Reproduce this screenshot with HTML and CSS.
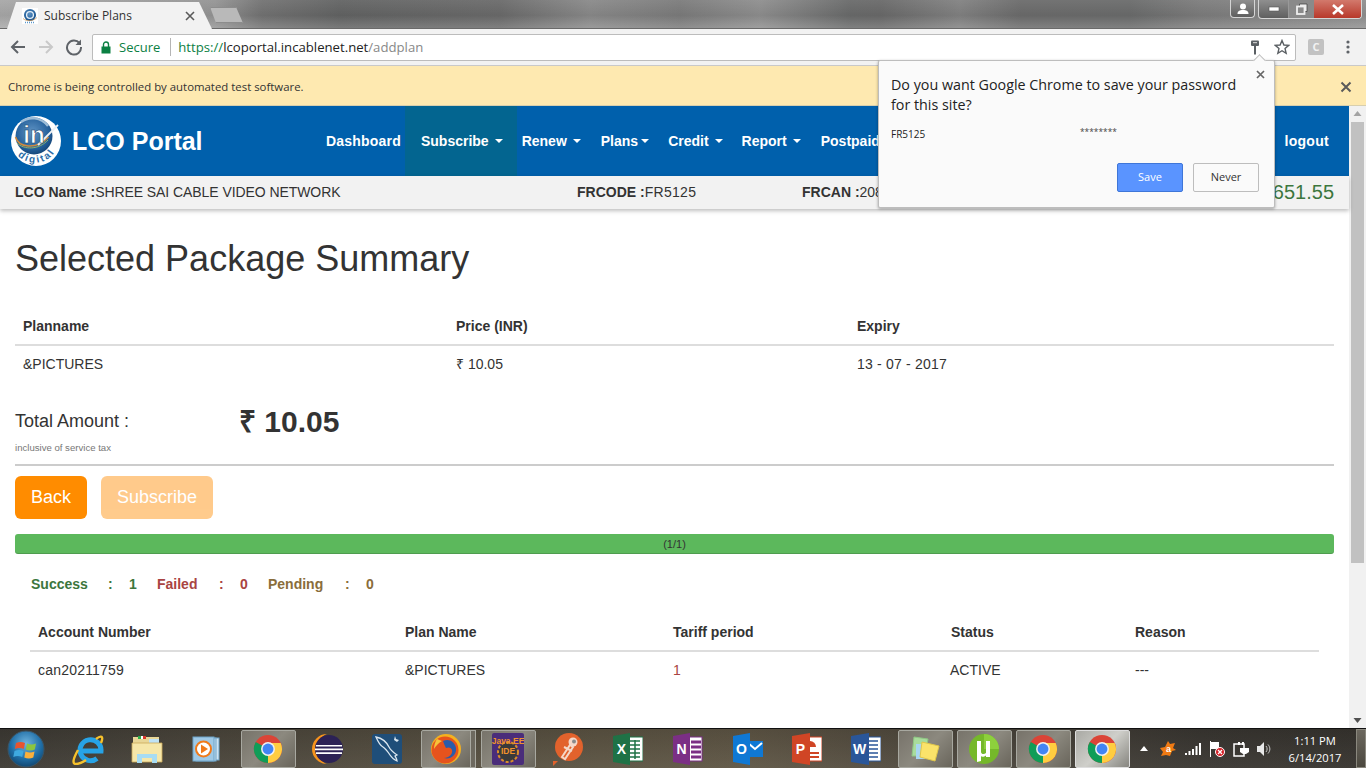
FILE: index.html
```html
<!DOCTYPE html>
<html lang="en">
<head>
<meta charset="utf-8">
<title>Subscribe Plans</title>
<link rel="stylesheet" href="styles.css">
</head>
<body>
<svg class="defs" width="0" height="0">
  <defs>
    <symbol id="chrome" viewBox="0 0 32 32">
      <circle cx="16" cy="16" r="15" fill="#db4437"/>
      <path d="M16 16 L3 23.5 A15 15 0 0 0 16 31 L24 16Z" fill="#0f9d58"/>
      <path d="M3 8.5 A15 15 0 0 0 3 23.5 L9.5 27 L16 16Z" fill="#0f9d58"/>
      <path d="M16 16 L16 31 A15 15 0 0 0 29.5 9.5 L16 9.5Z" fill="#ffcd40"/>
      <circle cx="16" cy="16" r="7.4" fill="#f1f1f1"/>
      <circle cx="16" cy="16" r="5.8" fill="#4285f4"/>
    </symbol>
    <radialGradient id="sphere" cx=".45" cy=".4" r=".65"><stop offset="0" stop-color="#5f93c4"/><stop offset=".7" stop-color="#24609b"/><stop offset="1" stop-color="#123f70"/></radialGradient>
  </defs>
</svg>

<header class="titlebar">
  <div class="tab">
    <svg class="favicon" width="16" height="16" viewBox="0 0 16 16"><rect width="16" height="16" fill="#fff"/><circle cx="8" cy="7" r="6" fill="url(#sphere)"/><circle cx="8" cy="7" r="3.4" fill="none" stroke="#e4eef6" stroke-width="1.300"/><path d="M1 10.500c3 3 10 3 14-1" fill="none" stroke="#c98f4a" stroke-width=".7"/><path d="M3 14.500h10" stroke="#5a98cc" stroke-width="1.600" stroke-dasharray="1 1"/></svg>
    <span class="tab-title">Subscribe Plans</span>
    <svg class="tab-close" width="10" height="10" viewBox="0 0 10 10"><path d="M1 1l8 8M9 1l-8 8" stroke="#5a5a5a" stroke-width="1.600"/></svg>
  </div>
  <div class="newtab"></div>
  <div class="winctrls">
    <div class="winbtn profile"><svg width="14" height="12" viewBox="0 0 14 12"><circle cx="7" cy="3.500" r="3" fill="#fff"/><path d="M1.500 11c0-3 2-4 5.500-4s5.500 1 5.500 4z" fill="#fff"/></svg></div>
    <div class="wingroup">
      <div class="winbtn min"><svg width="12" height="6" viewBox="0 0 12 6"><rect x="1" y="1" width="10" height="4" fill="#fff" stroke="#555" stroke-width=".6"/></svg></div>
      <div class="winbtn max"><svg width="12" height="12" viewBox="0 0 12 12"><path d="M3.500 1h7.500v7.500H8.500V3.500h-5z" fill="#eee" stroke="#444" stroke-width=".8"/><rect x="1" y="3.500" width="7.500" height="7.500" fill="none" stroke="#eee" stroke-width="1.800"/></svg></div>
      <div class="winbtn close"><svg width="14" height="11" viewBox="0 0 14 11"><path d="M2 1l10 9M12 1L2 10" stroke="#fff" stroke-width="2.600"/></svg></div>
    </div>
  </div>
</header>

<nav class="toolbar">
  <svg class="tool" width="18" height="18" viewBox="0 0 18 18"><path d="M16 9H3M9 3L3 9l6 6" fill="none" stroke="#5f6368" stroke-width="2"/></svg>
  <svg class="tool" width="18" height="18" viewBox="0 0 18 18"><path d="M2 9h13M9 3l6 6-6 6" fill="none" stroke="#c9c9c9" stroke-width="2"/></svg>
  <svg class="tool" width="18" height="18" viewBox="0 0 18 18"><path d="M14.500 5.200A7 7 0 1 0 16 9" fill="none" stroke="#5f6368" stroke-width="2"/><path d="M16 1.500V7h-5.500z" fill="#5f6368"/></svg>
  <div class="omnibox">
    <svg class="lock" width="10" height="13" viewBox="0 0 10 13"><path d="M2.500 6V3.500a2.500 2.500 0 0 1 5 0V6" fill="none" stroke="#0b8043" stroke-width="1.400"/><rect x="0.500" y="5.500" width="9" height="7" fill="#0b8043"/></svg>
    <span class="secure">Secure</span>
    <span class="sep"></span>
    <span class="url"><span class="u-scheme">https://</span><span class="u-host">lcoportal.incablenet.net</span><span class="u-path">/addplan</span></span>
    <svg class="key" width="10" height="15" viewBox="0 0 10 15"><rect x="1" y="0.500" width="8" height="5.500" rx="1" fill="#5a5f63"/><rect x="3" y="2" width="4" height="1.200" fill="#c8c8c8"/><rect x="4" y="6" width="2" height="8.500" fill="#5a5f63"/></svg>
    <svg class="star" width="16" height="16" viewBox="0 0 16 16"><path d="M8 1.500l1.900 4.500 4.800.4-3.650 3.150 1.100 4.700L8 11.700l-4.150 2.550 1.100-4.700L1.300 6.400l4.800-.4z" fill="none" stroke="#5a5f63" stroke-width="1.400"/></svg>
  </div>
  <span class="ext">C</span>
  <svg class="dots" width="4" height="14" viewBox="0 0 4 14"><circle cx="2" cy="2" r="1.600" fill="#5f6368"/><circle cx="2" cy="7" r="1.600" fill="#5f6368"/><circle cx="2" cy="12" r="1.600" fill="#5f6368"/></svg>
</nav>

<div class="automation">
  <span>Chrome is being controlled by automated test software.</span>
  <svg width="12" height="12" viewBox="0 0 12 12"><path d="M1.500 1.500l9 9M10.500 1.500l-9 9" stroke="#5a5a5a" stroke-width="2"/></svg>
</div>

<div class="viewport">
  <main class="page">
    <div class="navbar">
      <div class="brand">
        <svg class="logo" width="50" height="50" viewBox="0 0 50 50">
          <circle cx="25" cy="25" r="25" fill="#fff"/>
          <circle cx="23" cy="20" r="18.500" fill="url(#sphere)"/>
          <path d="M4.500 21c3 10 20 14 33 0" fill="none" stroke="#d08a3c" stroke-width="1.600"/>
          <path d="M6 27c7 7 22 7 31-3" fill="none" stroke="#8fb06a" stroke-width="1"/>
          <path d="M10 6c8-6 20-5 27 4" fill="none" stroke="#9dbdd8" stroke-width="2.400"/>
          <path d="M47 9L27 29" stroke="#eef2f4" stroke-width="1.800"/>
          <text class="logo-in" x="23" y="27" text-anchor="middle">in</text>
          <path id="logoarc" d="M6.500 39A23.500 23.500 0 0 0 47.500 23" fill="none"/>
          <text class="logo-digital"><textPath href="#logoarc" startOffset="1%">digital</textPath></text>
        </svg>
        <span class="brand-name">LCO Portal</span>
      </div>
      <ul class="menu">
        <li class="menu-item m-dash">Dashboard</li>
        <li class="menu-item active">Subscribe<i class="caret"></i></li>
        <li class="menu-item">Renew<i class="caret"></i></li>
        <li class="menu-item m-tight">Plans<i class="caret tight"></i></li>
        <li class="menu-item m-tight">Credit<i class="caret"></i></li>
        <li class="menu-item">Report<i class="caret"></i></li>
        <li class="menu-item">Postpaid</li>
      </ul>
      <span class="logout">logout</span>
    </div>
    <div class="infobar">
      <span class="cell c1"><b>LCO Name :</b><span class="lco-val">SHREE SAI CABLE VIDEO NETWORK</span></span>
      <span class="cell c2"><b>FRCODE :</b><span class="fr-val">FR5125</span></span>
      <span class="cell c3"><b>FRCAN :</b>20845125</span>
      <span class="balance">651.55</span>
    </div>
    <div class="content">
      <h1>Selected Package Summary</h1>
      <table class="plans">
        <thead><tr><th class="p1">Planname</th><th class="p2">Price (INR)</th><th>Expiry</th></tr></thead>
        <tbody><tr><td>&amp;PICTURES</td><td>₹ 10.05</td><td class="date">13 - 07 - 2017</td></tr></tbody>
      </table>
      <div class="total">
        <div class="total-label"><span>Total Amount :</span><small>inclusive of service tax</small></div>
        <div class="total-value">₹ 10.05</div>
      </div>
      <hr class="rule">
      <div class="actions">
        <button class="btn">Back</button>
        <button class="btn faded">Subscribe</button>
      </div>
      <div class="progress">(1/1)</div>
      <div class="stats">
        <span class="s-ok w1">Success</span><span class="s-ok w2">:</span><span class="s-ok w3">1</span>
        <span class="s-bad w4">Failed</span><span class="s-bad w5">:</span><span class="s-bad w6">0</span>
        <span class="s-pen w7">Pending</span><span class="s-pen w8">:</span><span class="s-pen">0</span>
      </div>
      <table class="results">
        <thead><tr><th class="r1">Account Number</th><th class="r2">Plan Name</th><th class="r3">Tariff period</th><th class="r4">Status</th><th>Reason</th></tr></thead>
        <tbody><tr><td class="acct">can20211759</td><td>&amp;PICTURES</td><td class="tariff">1</td><td class="active-status">ACTIVE</td><td>---</td></tr></tbody>
      </table>
    </div>
  </main>
  <div class="scrollbar">
    <svg width="17" height="16" viewBox="0 0 17 16"><path d="M8.500 5l4 5h-8z" fill="#a3a3a3"/></svg>
    <div class="thumb"></div>
    <div class="track"></div>
    <svg width="17" height="16" viewBox="0 0 17 16"><path d="M8.500 11l4-5h-8z" fill="#505050"/></svg>
  </div>

  <aside class="bubble">
    <i class="bubble-arrow"></i>
    <svg class="bubble-close" width="9" height="9" viewBox="0 0 9 9"><path d="M1 1l7 7M8 1L1 8" stroke="#666" stroke-width="1.700"/></svg>
    <p class="bubble-title">Do you want Google Chrome to save your password for this site?</p>
    <div class="cred"><span class="cred-user">FR5125</span><span class="mask">********</span></div>
    <div class="bubble-actions">
      <button class="bbtn save">Save</button>
      <button class="bbtn never">Never</button>
    </div>
  </aside>
</div>

<footer class="taskbar">
  <div class="start">
    <svg width="38" height="38" viewBox="0 0 38 38">
      <defs><radialGradient id="orb" cx=".5" cy=".35" r=".7"><stop offset="0" stop-color="#6fb4de"/><stop offset=".6" stop-color="#1f6ea6"/><stop offset="1" stop-color="#0f3f66"/></radialGradient></defs>
      <circle cx="19" cy="19" r="18" fill="url(#orb)" stroke="#3b5566"/>
      <path d="M9 13c3-1.500 6-1.500 9 0l-1.200 6c-3-1.300-6-1.300-9 0z" fill="#e8542f"/>
      <path d="M20 13.500c3 1.300 6 1.300 9 0l-1.200 6c-3 1.300-6 1.300-9 0z" fill="#8cc63f"/>
      <path d="M7.500 21c3-1.300 6-1.300 9 0l-1.200 6c-3-1.300-6-1.300-9 0z" fill="#3fa9e0"/>
      <path d="M18.500 21.500c3 1.300 6 1.300 9 0l-1.200 6c-3 1.300-6 1.300-9 0z" fill="#fbb03b"/>
    </svg>
  </div>
  <div class="tasks">
    <div class="task"><svg width="32" height="32" viewBox="0 0 32 32"><path d="M8 18h21A10.500 10.500 0 1 0 25 25.500" fill="none" stroke="#27a3e6" stroke-width="5"/><path d="M24 6c5-4 8-3 5 4M6 17C1 26 0 31 4 31c3 0 7-2 10-4" fill="none" stroke="#f6c12c" stroke-width="2.400"/></svg></div>
    <div class="task"><svg width="32" height="32" viewBox="0 0 32 32"><path d="M2 4h26v6H2z" fill="#e9d797"/><path d="M7 3h8v3H7z" fill="#fff"/><path d="M7 3h3v3H7z" fill="#2bb24c"/><path d="M12 3h3v3h-3z" fill="#d8392b"/><path d="M18 6h10v4H18z" fill="#bfe2f5"/><path d="M1 10h30v19H1z" fill="#f6e7a9" stroke="#caa95a" stroke-width=".8"/><path d="M6 30v-9h20v9h-5v-5H11v5z" fill="#a7dcf3"/></svg></div>
    <div class="task"><svg width="28" height="28" viewBox="0 0 28 28"><rect x="7" y="3" width="20" height="22" fill="#cfe4f3" stroke="#6ea4c8"/><rect x="4" y="3" width="20" height="23" fill="#bcd9ee" stroke="#6ea4c8"/><rect x="1" y="2" width="21" height="24" fill="#9fc9e6" stroke="#6ea4c8"/><circle cx="11.500" cy="14" r="8.500" fill="#f07a1a"/><circle cx="11.500" cy="14" r="6.500" fill="#fff"/><path d="M9 9.500l7 4.500-7 4.500z" fill="#f07a1a"/></svg></div>
    <div class="task lit gap3"><svg width="30" height="30"><use href="#chrome"/></svg></div>
    <div class="task gap1"><svg width="32" height="32" viewBox="0 0 32 32"><path d="M15 1a15 15 0 0 0 0 30c-6-2-10-8-10-15S9 3 15 1z" fill="#f7941e"/><circle cx="17" cy="16" r="14" fill="#2c2255"/><path d="M4 12h26v1.600H4zM3 15.500h28v1.800H3zM4 19.300h26v1.600H4z" fill="#fff"/></svg></div>
    <div class="task"><svg width="32" height="32" viewBox="0 0 32 32"><rect x="1" y="1" width="30" height="30" rx="3" fill="#1f4e79"/><path d="M5 4c5 1 10 4 13 10 2 4 5 6 8 8l-2 1c1 2 2 3 2 5-3-1-5-3-7-6-2-3-4-6-7-8-2-1-4-3-7-10z" fill="none" stroke="#dbe7f0" stroke-width="1.300"/><path d="M24 3l1 3 3 1-2 2-3-2z" fill="#dbe7f0"/></svg></div>
    <div class="task lit ff"><svg width="32" height="32" viewBox="0 0 32 32"><circle cx="16" cy="16" r="15" fill="#f5b11e"/><circle cx="15" cy="17" r="13.500" fill="#e6531d"/><path d="M13 8c6-3 12 1 13 7 1 7-6 12-12 10 5 0 9-4 8-8-1-3-4-3-6-2-1-2-2-4-3-7z" fill="#2a5caa"/><path d="M7 6c-2 3-3 6-3 10 2-3 4-6 8-8z" fill="#f7c23a"/></svg></div>
    <div class="task lit gap3"><svg width="32" height="32" viewBox="0 0 32 32"><rect x="0" y="0" width="32" height="32" rx="2" fill="#4a2d7a"/><circle cx="16" cy="19" r="10" fill="#3a3a3a" stroke="#d98d2b" stroke-width="2" stroke-dasharray="3 2"/><text class="jee" x="16" y="11" text-anchor="middle">Java EE</text><text class="jee" x="16" y="21" text-anchor="middle">IDE</text></svg></div>
    <div class="task gap1"><svg width="32" height="34" viewBox="0 0 32 34"><circle cx="17" cy="15" r="14" fill="#e2622c"/><path d="M1 29l5 0-5 5z" fill="#e2622c"/><path d="M10 25l8-12 3 2-8 12zM12 15l8 4" stroke="#f4d8c8" stroke-width="2" fill="none"/><circle cx="21" cy="10" r="4.500" fill="#f4d8c8"/><circle cx="22" cy="9.500" r="2" fill="#8a8a8a"/></svg></div>
    <div class="task gap1"><svg class="office" width="30" height="32" viewBox="0 0 30 32"><rect x="14" y="4" width="16" height="24" fill="#fff" stroke="#1f7246"/><path d="M17 8h10M17 12h10M17 16h10M17 20h10M17 24h10M22 7v19" stroke="#1f7246" stroke-width="1.500"/><path d="M0 3l17-3v32L0 29z" fill="#1f7246"/><text class="ofc" x="8.500" y="21" text-anchor="middle">X</text></svg></div>
    <div class="task gap1"><svg class="office" width="30" height="32" viewBox="0 0 30 32"><rect x="14" y="4" width="15" height="24" fill="#fff" stroke="#7b2f85"/><path d="M18 9h10M18 14h10M18 19h10M18 24h10" stroke="#7b2f85" stroke-width="3"/><path d="M0 3l17-3v32L0 29z" fill="#7b2f85"/><text class="ofc" x="8.500" y="21" text-anchor="middle">N</text></svg></div>
    <div class="task gap1"><svg class="office" width="30" height="32" viewBox="0 0 30 32"><rect x="14" y="8" width="16" height="16" fill="#0f78d4"/><path d="M15 10l7 6 7-6" fill="none" stroke="#fff" stroke-width="2"/><path d="M0 3l17-3v32L0 29z" fill="#0f78d4"/><text class="ofc" x="8.500" y="21" text-anchor="middle">O</text></svg></div>
    <div class="task"><svg class="office" width="30" height="32" viewBox="0 0 30 32"><rect x="14" y="4" width="16" height="24" fill="#fff" stroke="#d04525"/><path d="M18 8v6h6a6 6 0 0 0-6-6z" fill="#d04525"/><path d="M18 20h9M18 24h9" stroke="#d04525" stroke-width="2"/><path d="M0 3l18-3v32L0 29z" fill="#d04525"/><text class="ofc" x="8.500" y="21" text-anchor="middle">P</text></svg></div>
    <div class="task"><svg class="office" width="30" height="32" viewBox="0 0 30 32"><rect x="14" y="4" width="16" height="24" fill="#fff" stroke="#2a5699"/><path d="M18 8h9M18 12h9M18 16h9M18 20h9M18 24h9" stroke="#2a5699" stroke-width="1.500"/><path d="M0 3l18-3v32L0 29z" fill="#2a5699"/><text class="ofc" x="8.500" y="21" text-anchor="middle">W</text></svg></div>
    <div class="task lit"><svg width="32" height="30" viewBox="0 0 32 30"><path d="M5 3l14 2-3 17H3z" fill="#a9dc9c" stroke="#8fc684"/><path d="M7 10h13v15H7z" fill="#a9d6f0"/><path d="M13 8l17 4-4 15-15-4z" fill="#fbe36a" stroke="#e0c64b"/></svg></div>
    <div class="task lit"><svg width="32" height="32" viewBox="0 0 32 32"><circle cx="16" cy="16" r="15" fill="#75b82a"/><path d="M16 1a15 15 0 0 1 15 15H16z" fill="#8dd03c"/><path d="M9 8h4v11c0 2 3 3 5 1V8h4v16h-4v-1.500c-2 1.500-4 1.500-5 .8V28l-4 1z" fill="#fff"/></svg></div>
    <div class="task lit"><svg width="30" height="30"><use href="#chrome"/></svg></div>
    <div class="task lit bright"><svg width="30" height="30"><use href="#chrome"/></svg></div>
  </div>
  <div class="tray">
    <svg class="tray-caret" width="8" height="5" viewBox="0 0 8 5"><path d="M4 0l4 5H0z" fill="#fff"/></svg>
    <svg class="tray-avast" width="16" height="16" viewBox="0 0 16 16"><path d="M8 0l2 3 5-1-2 5 3 2-4 1-2 5-4-1-5 1 2-4-3-4 5-1z" fill="#f07a13"/><text class="avast" x="8.500" y="11" text-anchor="middle">a</text></svg>
    <svg width="16" height="13" viewBox="0 0 16 13"><path d="M0 11h2v2H0zM3.500 9h2v4h-2zM7 7h2v6H7zM10.500 4h2v9h-2zM14 1h2v12h-2z" fill="#fff"/></svg>
    <svg width="16" height="16" viewBox="0 0 16 16"><path d="M1.500 0v16" stroke="#fff"/><path d="M2 1h8v7H2z" fill="#fff"/><circle cx="11" cy="11" r="4.500" fill="#d61f26" stroke="#fff"/><path d="M9 9l4 4M13 9l-4 4" stroke="#fff" stroke-width="1.300"/></svg>
    <svg width="16" height="16" viewBox="0 0 16 16"><rect x="1" y="3" width="10" height="12" fill="none" stroke="#fff" stroke-width="1.500"/><path d="M5 1h2v3H5zM9 1h2v3H9z" fill="#fff"/><path d="M7 7h9v4l-3 2h-3l-3-2z" fill="#fff"/></svg>
    <svg width="16" height="14" viewBox="0 0 16 14"><path d="M0 4h3l4-4v14l-4-4H0z" fill="#e8e8e8"/><path d="M9 4c1.500 2 1.500 4 0 6M11 2.500c2.500 3 2.500 6 0 9" fill="none" stroke="#c9c9c9"/></svg>
  </div>
  <div class="clock"><span>1:11 PM</span><span>6/14/2017</span></div>
  <div class="showdesk"></div>
</footer>
</body>
</html>
```

FILE: styles.css
```css
* { box-sizing: border-box; }
html, body { margin: 0; height: 768px; overflow: hidden; }
body {
  width: 1366px;
  display: flex;
  flex-direction: column;
  font-family: "Liberation Sans", Arial, sans-serif;
  color: #333;
  background: #fff;
}
.defs { position: absolute; }

/* Browser frame */
.titlebar {
  height: 29px;
  flex: none;
  display: flex;
  align-items: flex-end;
  padding-left: 7px;
  background:
    linear-gradient(180deg, rgba(255,255,255,.05), rgba(0,0,0,.05) 55%, rgba(255,255,255,.14)),
    linear-gradient(90deg, #a8a8a8 0, #959595 215px, #737373 262px, #636464 340px, #6b6b6b 500px, #8a8a8a 590px, #7c7c7c 680px, #8f8f8f 760px, #6a6b6b 850px, #6a6a6a 880px, #828282 960px, #6c6c6c 1020px, #6b6c6c 1130px, #7d7d7d 1200px, #909090 1366px);
  border-bottom: 1px solid #6a6a6a;
}
.tab {
  width: 205px;
  height: 27px;
  margin-bottom: -1px;
  display: flex;
  align-items: center;
  padding: 0 17px 0 15px;
  background: #f2f2f2;
  clip-path: polygon(0 100%, 9px 0, 192px 0, 100% 100%);
}
.tab-title {
  margin-left: 6px;
  flex: 1;
  font: 12px "Open Sans", "Noto Sans", sans-serif;
  color: #333;
}
.newtab {
  width: 33px;
  height: 16px;
  margin: 0 0 5px -2px;
  background: #b9b9b9;
  border: 1px solid #8c8c8c;
  clip-path: polygon(0 0, 26px 0, 100% 100%, 6px 100%);
}
.winctrls {
  margin-left: auto;
  align-self: flex-start;
  display: flex;
  gap: 3px;
  padding-right: 4px;
}
.winbtn { display: flex; align-items: center; justify-content: center; height: 18px; }
.profile, .wingroup {
  border: 1px solid #d5d5d5;
  border-top: 0;
  border-radius: 0 0 4px 4px;
  background: linear-gradient(180deg, #8f8f8f, #5f5f5f);
}
.profile { width: 25px; }
.wingroup { display: flex; overflow: hidden; }
.min { width: 29px; }
.max { width: 26px; border-left: 1px solid #999; background: #8a8a8a; }
.close { width: 47px; background: linear-gradient(180deg, #d2796c, #b8382a); }

.toolbar {
  height: 36px;
  flex: none;
  display: flex;
  align-items: center;
  padding-left: 9px;
  background: #f2f2f2;
}
.tool { margin-right: 10px; flex: none; }
.omnibox {
  width: 1204px;
  height: 27px;
  margin-left: -1px;
  display: flex;
  align-items: center;
  padding: 0 5px 0 8px;
  background: #fff;
  border: 1px solid #bcbcbc;
  border-radius: 2px;
  font: 13px "Open Sans", "Noto Sans", sans-serif;
}
.secure { margin-left: 8px; color: #0b8043; }
.sep { width: 1px; height: 18px; margin: 0 7px 0 10px; background: #b5b5b5; }
.url { flex: 1; font-size: 13.160px; color: #0b7f8a; }
.u-scheme { color: #0b8043; }
.u-host { color: #222; }
.u-path { color: #888; }
.key { margin-right: 14px; }
.ext {
  width: 16px;
  height: 16px;
  margin-left: 12px;
  background: #c2c2c2;
  border-radius: 2px;
  color: #f2f2f2;
  font: bold 11px/16px "Open Sans", sans-serif;
  text-align: center;
}
.dots { margin-left: 22px; }
.automation {
  height: 41px;
  flex: none;
  display: flex;
  align-items: center;
  justify-content: space-between;
  padding: 2px 14px 0 8px;
  background: #fee9b0;
  border-top: 1px solid #c9c9c9;
  border-bottom: 1px solid #d8cfae;
  font: 11.400px "Open Sans", "Noto Sans", sans-serif;
  color: #333;
}

/* Page */
.viewport { position: relative; flex: 1; min-height: 0; display: flex; }
.page { flex: 1; min-width: 0; }
.navbar {
  height: 70px;
  display: flex;
  align-items: center;
  padding-left: 11px;
  background: #0060ac;
  color: #fff;
}
.brand { display: flex; align-items: center; width: 305px; }
.brand-name { margin-left: 11px; font-size: 25px; font-weight: bold; }
.logo-in { font: bold 24px "Liberation Sans", sans-serif; fill: #fff; stroke: #143f6e; stroke-width: .6px; }
.logo-digital { font: bold 10px "Liberation Sans", sans-serif; fill: #2a6ba8; letter-spacing: 2px; }
.menu {
  list-style: none;
  display: flex;
  align-items: stretch;
  height: 100%;
  margin: 0;
  padding: 0;
  font-size: 14px;
  font-weight: bold;
}
.menu-item { display: flex; align-items: center; padding: 0 10px; }
.m-dash { letter-spacing: .2px; }
.m-tight { padding-right: 9px; }
.menu-item.active { padding: 0 14px 0 16px; margin: 0 -5px 0 -6px; background: #036590; }
.caret {
  width: 0;
  height: 0;
  margin-left: 6px;
  border-top: 4px solid #fff;
  border-left: 4px solid transparent;
  border-right: 4px solid transparent;
}
.caret.tight { margin-left: 3px; }
.logout { margin-left: auto; margin-right: 20px; font-size: 14px; font-weight: bold; letter-spacing: .3px; }
.infobar {
  position: relative;
  height: 33px;
  display: flex;
  align-items: center;
  padding: 0 15px 2px;
  background: #f2f2f2;
  box-shadow: 0 2px 4px rgba(0,0,0,.25);
  font-size: 14px;
  color: #333;
}
.cell { flex: none; }
.c1 { width: 562px; }
.c2 { width: 225px; }
.lco-val { letter-spacing: -.07px; }
.fr-val { letter-spacing: .3px; }
.balance { margin-left: auto; margin-top: 2px; font-size: 20px; color: #3c763d; }

.content { padding: 0 15px; }
h1 {
  margin: 30px 0 0;
  font-size: 36px;
  line-height: 40px;
  font-weight: 400;
}
table { width: 100%; border-collapse: collapse; font-size: 14px; }
th { text-align: left; font-weight: bold; padding: 8px; line-height: 20px; border-bottom: 2px solid #ddd; }
td { padding: 8px; line-height: 20px; }
.plans { margin-top: 29px; }
.p1 { width: 433px; }
.p2 { width: 401px; }
.date { letter-spacing: .2px; }
.total { display: flex; margin-top: 19px; height: 63px; }
.total-label { width: 224px; display: flex; flex-direction: column; font-size: 18px; line-height: 20px; padding-top: 10px; }
.total-label small { margin-top: 11px; font-size: 9.600px; line-height: 12px; color: #777; }
.total-value { font-size: 30px; line-height: 36px; font-weight: bold; padding-top: 3px; }
.rule { margin: 0; border: 0; border-top: 2px solid #ccc; }
.actions { display: flex; gap: 14px; margin-top: 10px; }
.btn {
  height: 43px;
  padding: 0 16px;
  border: 0;
  border-radius: 6px;
  background: #ff8c00;
  color: #fff;
  font: 18px "Liberation Sans", sans-serif;
}
.btn.faded { opacity: .45; }
.progress {
  height: 20px;
  margin-top: 15px;
  border-radius: 3px;
  background: #5cb85c;
  box-shadow: inset 0 -1px 0 rgba(0,0,0,.15);
  text-align: center;
  font-size: 11px;
  line-height: 20px;
  color: #333;
}
.stats { display: flex; margin: 20px 0 0 16px; font-size: 14px; font-weight: bold; line-height: 20px; }
.w1 { width: 77px; }
.w2 { width: 21px; }
.w3 { width: 28px; }
.w4 { width: 62px; }
.w5 { width: 21px; }
.w6 { width: 28px; }
.w7 { width: 77px; }
.w8 { width: 21px; }
.s-ok { color: #3c763d; }
.s-bad { color: #a94442; }
.s-pen { color: #8a6d3b; }
.results { margin: 20px 0 0 15px; width: 1289px; }
.r1 { width: 367px; }
.r2 { width: 268px; }
.r3 { width: 278px; }
.r4 { width: 184px; }
.acct { letter-spacing: .2px; }
.tariff { color: #a94442; }
.active-status { padding-left: 7px; }

.scrollbar {
  width: 17px;
  flex: none;
  display: flex;
  flex-direction: column;
  background: #f1f1f1;
}
.thumb { height: 441px; margin: 0 2px; background: #c1c1c1; }
.track { flex: 1; }

/* Save-password bubble */
.bubble {
  position: absolute;
  left: 878px;
  top: -46px;
  width: 397px;
  height: 148px;
  padding: 14px 15px 0 12px;
  background: #fafafa;
  border: 1px solid #bdbdbd;
  border-radius: 2px;
  box-shadow: 0 1px 3px rgba(0,0,0,.35);
  font-family: "Open Sans", "Noto Sans", sans-serif;
  color: #222;
}
.bubble-arrow {
  position: absolute;
  top: -5px;
  left: 376px;
  width: 9px;
  height: 9px;
  background: #fafafa;
  border-top: 1px solid #bdbdbd;
  border-left: 1px solid #bdbdbd;
  transform: rotate(45deg);
}
.bubble-close { position: absolute; top: 9px; right: 9px; }
.bubble-title { margin: 0; width: 365px; font-size: 14.300px; line-height: 20px; }
.cred { display: flex; align-items: flex-start; margin-top: 12px; font-size: 10px; line-height: 14px; }
.cred-user { width: 189px; }
.mask { font-size: 8.400px; line-height: 10px; color: #444; }
.bubble-actions { position: absolute; top: 102px; right: 15px; display: flex; gap: 10px; }
.bbtn { width: 66px; height: 29px; padding: 0 0 2px; border-radius: 2px; font: 11px "Open Sans", "Noto Sans", sans-serif; }
.save { background: #5a94ff; border: 1px solid #3f76d8; color: #fff; }
.never { background: #fafafa; border: 1px solid #bdbdbd; color: #333; }

/* Windows taskbar */
.taskbar {
  height: 40px;
  flex: none;
  display: flex;
  align-items: center;
  border-top: 1px solid #111;
  background:
    linear-gradient(180deg, rgba(0,0,0,.1), rgba(255,255,255,.04)),
    linear-gradient(90deg, #3d3a34 0, #4a453b 200px, #5c5443 600px, #5f5645 750px, #4d473d 950px, #3a3732 1200px, #37342f 1366px);
  color: #fff;
}
.start { width: 58.500px; flex: none; padding-left: 7px; display: flex; }
.tasks { display: flex; height: 100%; flex: none; }
.task {
  width: 59px;
  flex: none;
  display: flex;
  align-items: center;
  justify-content: center;
  position: relative;
}
.gap3 { margin-left: 3px; }
.gap1 { margin-left: 1px; }
.task.lit::before {
  content: "";
  position: absolute;
  inset: 1px 2px 0 2px;
  border: 1px solid #a8a8a0;
  border-radius: 2px;
  background: linear-gradient(135deg, #77736a, #8c897f 50%, #69655b);
}
.task.ff::before { left: 4px; right: 4px; }
.task.ff::after {
  content: "";
  position: absolute;
  top: 1px;
  bottom: 0;
  right: 0;
  width: 4px;
  border: 1px solid #a8a8a0;
  background: #6d695f;
}
.task.bright::before { background: linear-gradient(135deg, #a9a9a4, #cfcfca 50%, #86857f); border-color: #ddd; }
.task svg { position: relative; }
.jee { font: bold 8.500px "Liberation Sans", sans-serif; fill: #f0922b; }
.ofc { font: bold 14px "Liberation Sans", sans-serif; fill: #fff; }
.avast { font: bold 9px "Liberation Sans", sans-serif; fill: #fff; }
.tray { display: flex; align-items: center; gap: 8px; margin-left: 8.500px; flex: none; }
.tray-caret { margin-right: 4px; }
.tray-avast { margin-right: 1px; }
.clock {
  width: 82px;
  margin-left: 1px;
  padding-top: 1px;
  flex: none;
  display: flex;
  flex-direction: column;
  align-items: center;
  font: 11.200px/17px "Open Sans", "Noto Sans", sans-serif;
}
.showdesk {
  width: 14px;
  height: 100%;
  margin-left: auto;
  background: linear-gradient(180deg, #6b675e, #4b483f);
  border: 1px solid #8a887e;
}
```
